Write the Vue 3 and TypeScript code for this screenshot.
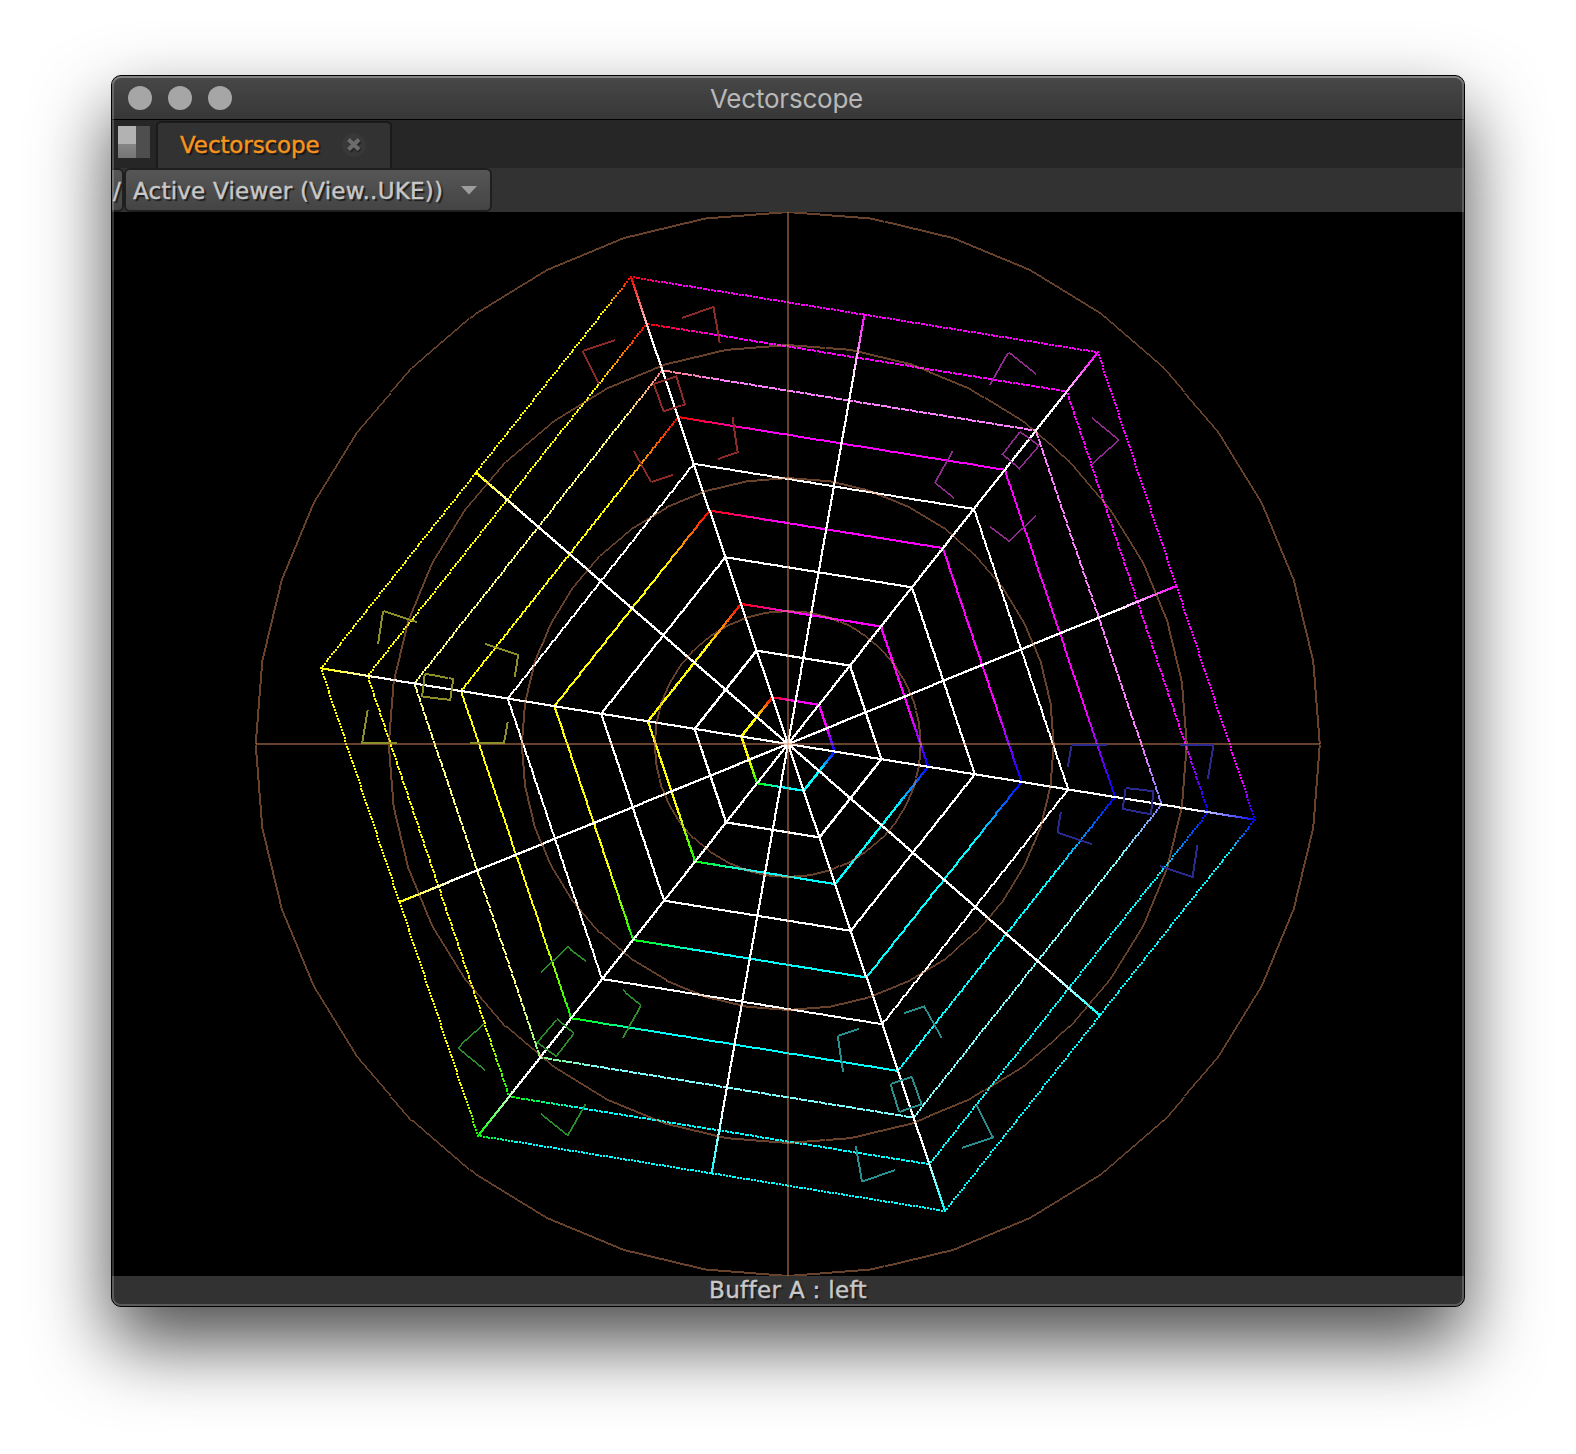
<script setup lang="ts">
import { onMounted, ref } from 'vue'

type Point = [number, number]
type Rgb = [number, number, number]

const WIDTH = 1352
const HEIGHT = 1064
const CX = 676
const CY = 532
const STEPS = 167

const scope = ref<HTMLCanvasElement | null>(null)

// Hexagon corners relative to the centre, with their pure hues.
const corners: { at: Point; color: Rgb }[] = [
  { at: [-157, -467], color: [255, 0, 0] },
  { at: [309.8, -391.7], color: [255, 0, 255] },
  { at: [467, 75.7], color: [0, 0, 255] },
  { at: [157, 467], color: [0, 255, 255] },
  { at: [-309.8, 391.7], color: [0, 255, 0] },
  { at: [-467, -75.7], color: [255, 255, 0] },
]

// Share of an edge over which a primary blends into its neighbour.
const blend: Record<number, number> = { 10: 0.09, 9: 0.18, 8: 0.17, 7: 0.27, 5: 0.3, 3: 0.36, 1: 0.5 }

// Target brackets for one half of the wheel; the other half is point-symmetric.
const targets: { color: string; opposite: string; box: Point[]; brackets: Point[][] }[] = [
  {
    color: '#8f2a2a',
    opposite: '#2a8f8f',
    box: [[654, 383.7], [676.7, 376], [685.3, 404.3], [664, 411.3]],
    brackets: [
      [[681.3, 318], [713.7, 306.7], [720, 342.7]],
      [[614.7, 340], [582.7, 350.7], [599.3, 383.3]],
      [[634, 450.3], [651.3, 481.7], [672.7, 475]],
      [[732.7, 416.3], [738, 452], [717.3, 459.3]],
    ],
  },
  {
    color: '#8f8f2a',
    opposite: '#2a2a8f',
    box: [[425, 673.7], [453.3, 679], [450.3, 700], [422.3, 696.7]],
    brackets: [
      [[378.3, 643.7], [383.3, 611], [416.7, 622]],
      [[484.3, 644], [518.3, 655.3], [515, 676.7]],
      [[368, 709.3], [362.3, 743], [396.7, 743]],
      [[508, 721.7], [504.3, 743], [469.3, 743]],
    ],
  },
  {
    color: '#8f2a8f',
    opposite: '#2a8f2a',
    box: [[1020, 431.7], [1039, 445.7], [1019.3, 469], [1002.3, 454.7]],
    brackets: [
      [[990, 384.7], [1008.3, 352.3], [1035.7, 374]],
      [[1091.3, 418], [1118.7, 440], [1092, 464]],
      [[953, 450.3], [935, 482.7], [953.7, 498]],
      [[990, 526.7], [1008.7, 541], [1035.7, 516]],
    ],
  },
]

function mix(a: Rgb, b: Rgb, t: number): Rgb {
  const k = Math.min(1, Math.max(0, t))
  return [a[0] + (b[0] - a[0]) * k, a[1] + (b[1] - a[1]) * k, a[2] + (b[2] - a[2]) * k]
}

function css(c: Rgb): string {
  return `rgb(${c.map((v) => Math.round(v)).join(',')})`
}

function isPrimary(c: Rgb): boolean {
  return c[0] + c[1] + c[2] === 255
}

onMounted(() => {
  const ctx = scope.value?.getContext('2d')
  if (!ctx) return

  const dot = (x: number, y: number, color: string) => {
    ctx.fillStyle = color
    ctx.fillRect(Math.round(CX + x) - 1, Math.round(CY + y) - 1, 2, 2)
  }

  // Non-antialiased line, two pixels thick across its minor axis.
  const line = (a: Point, b: Point) => {
    const dx = b[0] - a[0]
    const dy = b[1] - a[1]
    const n = Math.max(1, Math.round(Math.max(Math.abs(dx), Math.abs(dy))))
    const wide = Math.abs(dx) >= Math.abs(dy)
    for (let i = 0; i < n; i++) {
      const x = Math.round(a[0] + (dx * (i + 0.5)) / n - 0.25)
      const y = Math.round(a[1] + (dy * (i + 0.5)) / n)
      if (wide) ctx.fillRect(x, y - 1, 1, 2)
      else ctx.fillRect(x - 1, y, 2, 1)
    }
  }

  ctx.fillStyle = '#000'
  ctx.fillRect(0, 0, WIDTH, HEIGHT)

  const white: Rgb = [255, 255, 255]

  for (let ring = 1; ring <= 10; ring++) {
    const scale = ring / 10
    for (let side = 0; side < 6; side++) {
      const from = corners[side]
      const to = corners[(side + 1) % 6]
      for (let i = 0; i <= STEPS; i++) {
        const t = i / STEPS
        let color: Rgb = white
        if (blend[ring]) {
          color = isPrimary(from.color)
            ? mix(from.color, to.color, t / blend[ring])
            : mix(to.color, from.color, (1 - t) / blend[ring])
          if (ring === 8) color = mix(color, white, 0.5)
        }
        dot(
          (from.at[0] + (to.at[0] - from.at[0]) * t) * scale,
          (from.at[1] + (to.at[1] - from.at[1]) * t) * scale,
          css(color),
        )
      }
    }
  }

  const spoke = (end: Point, color: Rgb, fade: number) => {
    const n = 470
    for (let i = 0; i <= n; i++) {
      const t = i / n
      dot(end[0] * t, end[1] * t, css(mix(color, white, (1 - t) / fade)))
    }
  }
  for (let side = 0; side < 6; side++) {
    const from = corners[side]
    const to = corners[(side + 1) % 6]
    const secondary = isPrimary(from.color) ? to.color : from.color
    spoke([(from.at[0] + to.at[0]) / 2, (from.at[1] + to.at[1]) / 2], secondary, 0.15)
    spoke(from.at, from.color, 0.13)
  }

  // Graticule: axes and four 40-sided circles.
  ctx.fillStyle = 'rgba(217, 137, 87, 0.48)'
  ctx.fillRect(CX - 532, CY - 1, 1064, 2)
  ctx.fillRect(CX - 1, 0, 2, HEIGHT)
  for (const r of [133, 266, 399, 532]) {
    for (let i = 0; i < 40; i++) {
      const a = (i * Math.PI) / 20
      const b = ((i + 1) * Math.PI) / 20
      line([CX + r * Math.cos(a), CY + r * Math.sin(a)], [CX + r * Math.cos(b), CY + r * Math.sin(b)])
    }
  }

  const local = (p: Point): Point => [p[0] - 112, p[1] - 212]
  const mirror = (p: Point): Point => [WIDTH - (p[0] - 112), HEIGHT - (p[1] - 212)]
  for (const target of targets) {
    const shapes = [[...target.box, target.box[0]], ...target.brackets]
    for (const [color, place] of [[target.color, local], [target.opposite, mirror]] as const) {
      ctx.fillStyle = color
      for (const shape of shapes) {
        for (let i = 1; i < shape.length; i++) line(place(shape[i - 1]), place(shape[i]))
      }
    }
  }
})
</script>

<template>
  <main class="desktop">
    <section class="window">
      <header class="titlebar">
        <span class="lights"><i></i><i></i><i></i></span>
        <h1>Vectorscope</h1>
      </header>
      <nav class="tabs">
        <span class="layout"><i></i><i></i></span>
        <div class="tab">
          <span class="tab-label">Vectorscope</span>
          <svg class="close" width="26" height="26" viewBox="0 0 26 26">
            <circle cx="13" cy="13" r="12" fill="#383838" />
            <path d="M8 8 18 18M18 8 8 18" stroke="#262626" stroke-width="5" transform="translate(.8 1)" />
            <path d="M7.5 7.5 18 17.5M18 7.5 7.5 17.5" stroke="#6c6c6c" stroke-width="4" />
          </svg>
        </div>
      </nav>
      <div class="toolbar">
        <span class="stub">/</span>
        <button class="picker">
          <span class="picker-label">Active Viewer (View..UKE))</span>
          <svg width="16" height="9" viewBox="0 0 16 9"><path d="M0 0h16L8 8.5z" fill="#9c9c9c" /></svg>
        </button>
      </div>
      <canvas ref="scope" class="scope" :width="WIDTH" :height="HEIGHT"></canvas>
      <footer class="status">Buffer A : left</footer>
    </section>
  </main>
</template>

<style>
body {
  margin: 0;
  background: #fff;
}
</style>

<style scoped>
.desktop {
  box-sizing: border-box;
  width: 1576px;
  height: 1454px;
  padding: 75px 111px 0;
  overflow: hidden;
  font-family: 'DejaVu Sans', Verdana, sans-serif;
}
.window {
  position: relative;
  box-sizing: border-box;
  width: 1354px;
  height: 1232px;
  border: 1px solid #000;
  border-radius: 10px;
  display: flex;
  flex-direction: column;
  background: #323232;
  box-shadow: 0 36px 76px rgba(0, 0, 0, 0.7);
}
.window::after {
  content: '';
  position: absolute;
  inset: 0;
  border-radius: 9px;
  box-shadow: inset 0 0 0 2px rgba(255, 255, 255, 0.2), inset 0 2px 0 rgba(255, 255, 255, 0.16);
  pointer-events: none;
}
.titlebar {
  box-sizing: border-box;
  position: relative;
  height: 44px;
  flex: none;
  display: flex;
  align-items: center;
  justify-content: center;
  border-bottom: 1px solid #000;
  border-radius: 9px 9px 0 0;
  background: linear-gradient(#484848, #373737);
}
.lights {
  position: absolute;
  left: 16px;
  top: 10px;
  display: flex;
  gap: 16px;
}
.lights i {
  width: 24px;
  height: 24px;
  border-radius: 50%;
  background: #a6a6a6;
}
h1 {
  margin: 2px 3px 0 0;
  font: 400 26px/30px Inter, sans-serif;
  letter-spacing: -0.22px;
  color: #b8b8b8;
}
.tabs {
  height: 48px;
  flex: none;
  display: flex;
  background: #262626;
}
.layout {
  display: flex;
  width: 32px;
  height: 32px;
  margin: 6px 6px 0 6px;
}
.layout i {
  width: 18px;
  background: linear-gradient(#b2b2b2 18px, #858585 18px, #757575);
}
.layout i + i {
  width: 14px;
  background: #4e4e4e;
}
.tab {
  box-sizing: border-box;
  width: 236px;
  height: 47px;
  margin-top: 1px;
  padding: 0 23px 2px 22px;
  display: flex;
  align-items: center;
  justify-content: space-between;
  background: #323232;
  border: 2px solid #1a1a1a;
  border-bottom: 0;
  border-radius: 5px 5px 0 0;
}
.tab-label {
  font-size: 23px;
  line-height: 30px;
  letter-spacing: -0.1px;
  color: #f7941d;
  white-space: nowrap;
  text-shadow: 2px 2px 1px #161616;
  -webkit-text-stroke: 0.4px #f7941d;
}
.toolbar {
  height: 44px;
  flex: none;
  display: flex;
  background: #323232;
}
.stub,
.picker {
  box-sizing: border-box;
  height: 44px;
  border: 2px solid #1f1f1f;
  border-radius: 6px;
  background: linear-gradient(#565656, #444);
  color: #c8c8c8;
  font-family: inherit;
  font-size: 23px;
  text-shadow: 2px 2px 1px #1c1c1c;
  -webkit-text-stroke: 0.4px #c8c8c8;
}
.stub {
  width: 12px;
  border-left: 0;
  border-radius: 0 6px 6px 0;
  padding-left: 1px;
  line-height: 42px;
  overflow: hidden;
}
.picker {
  width: 368px;
  margin: 0;
  padding: 0 13px 0 7px;
  display: flex;
  align-items: center;
  justify-content: space-between;
}
.picker-label {
  white-space: nowrap;
  padding-top: 2px;
  letter-spacing: 0.22px;
}
.scope {
  display: block;
  width: 1352px;
  height: 1064px;
  flex: none;
}
.status {
  height: 30px;
  flex: none;
  border-radius: 0 0 9px 9px;
  background: #323232;
  color: #c8c8c8;
  font-size: 23px;
  line-height: 28px;
  letter-spacing: 0.34px;
  text-align: center;
  text-shadow: 2px 2px 1px #1c1c1c;
  -webkit-text-stroke: 0.4px #c8c8c8;
}
</style>
